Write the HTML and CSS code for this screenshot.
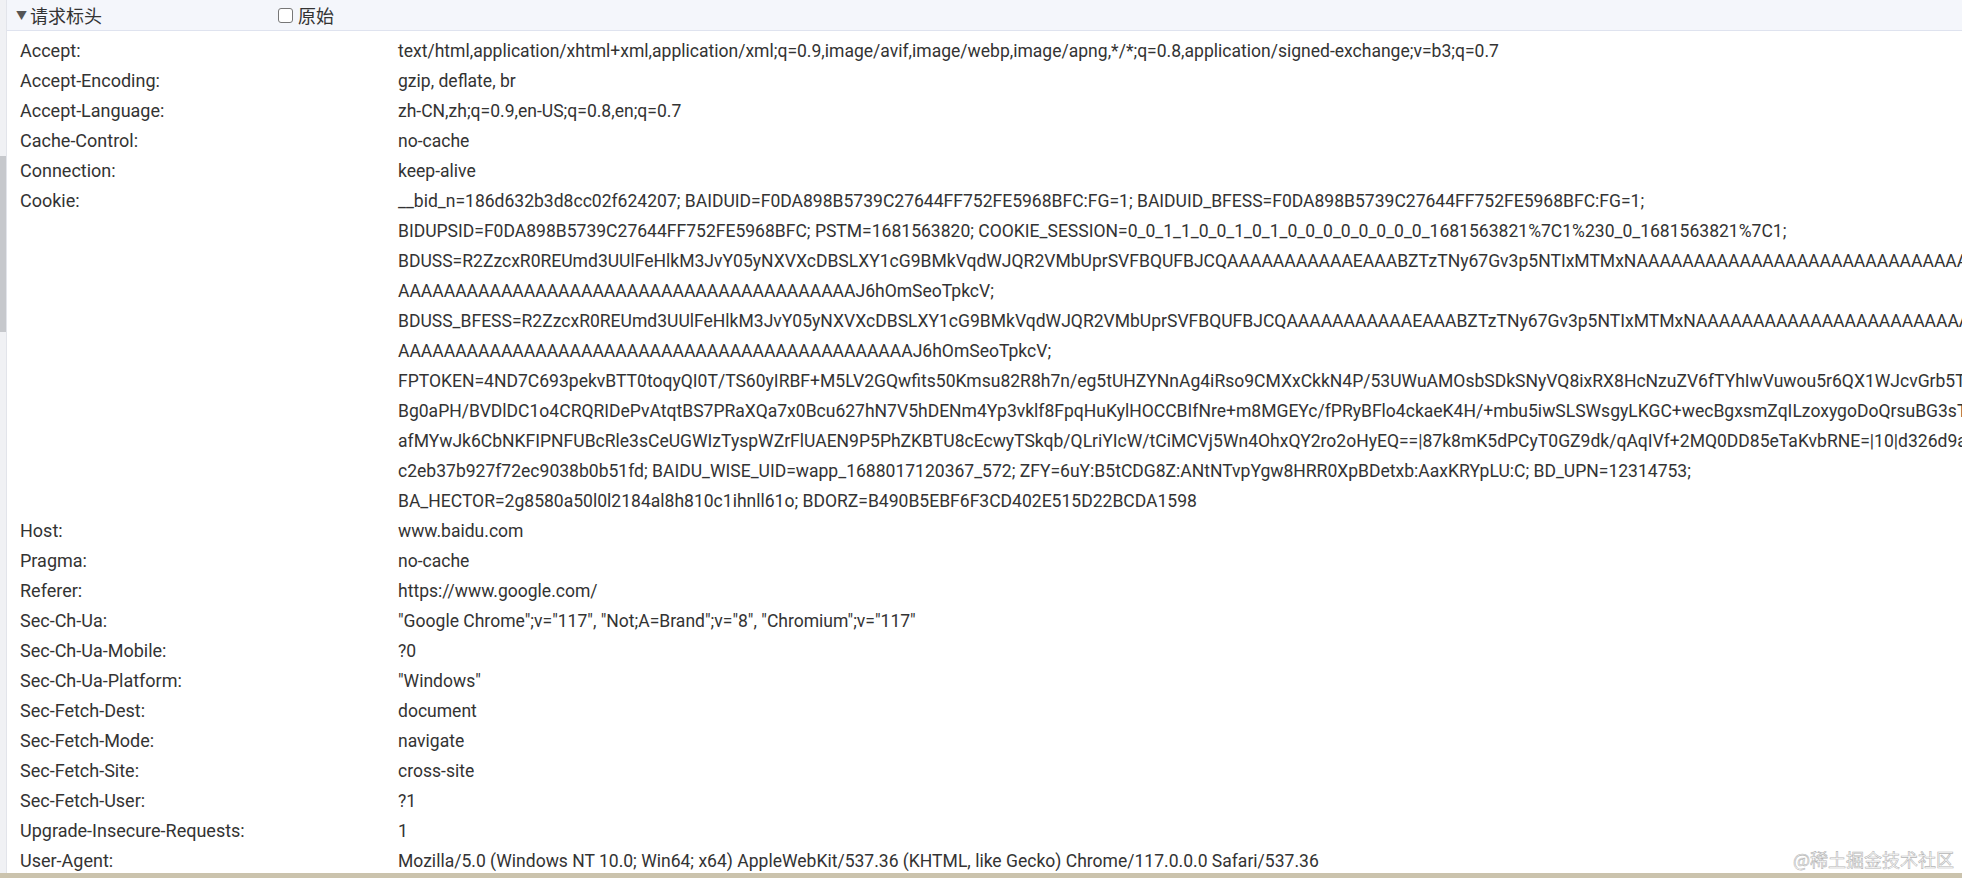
FILE: index.html
```html
<!DOCTYPE html>
<html lang="zh-CN">
<head>
    <meta charset="UTF-8">
    <title>请求标头</title>
    <link rel="stylesheet" href="styles.css">
</head>
<body>
    <div class="page">
        <div class="gutter"><div class="thumb"></div></div>
        <div class="panel">
            <div class="section-head">
                <span class="caret">▼</span>
                <span class="title">请求标头</span>
                <label class="raw"><span class="box"></span>原始</label>
            </div>
            <div class="headers">
                <div class="name">Accept:</div>
                <div class="value">text/html,application/xhtml+xml,application/xml;q=0.9,image/avif,image/webp,image/apng,*/*;q=0.8,application/signed-exchange;v=b3;q=0.7</div>
                <div class="name">Accept-Encoding:</div>
                <div class="value">gzip, deflate, br</div>
                <div class="name">Accept-Language:</div>
                <div class="value">zh-CN,zh;q=0.9,en-US;q=0.8,en;q=0.7</div>
                <div class="name">Cache-Control:</div>
                <div class="value">no-cache</div>
                <div class="name">Connection:</div>
                <div class="value">keep-alive</div>
                <div class="name">Cookie:</div>
                <div class="value">
                    <div>__bid_n=186d632b3d8cc02f624207; BAIDUID=F0DA898B5739C27644FF752FE5968BFC:FG=1; BAIDUID_BFESS=F0DA898B5739C27644FF752FE5968BFC:FG=1;</div>
                    <div>BIDUPSID=F0DA898B5739C27644FF752FE5968BFC; PSTM=1681563820; COOKIE_SESSION=0_0_1_1_0_0_1_0_1_0_0_0_0_0_0_0_0_1681563821%7C1%230_0_1681563821%7C1;</div>
                    <div>BDUSS=R2ZzcxR0REUmd3UUlFeHlkM3JvY05yNXVXcDBSLXY1cG9BMkVqdWJQR2VMbUprSVFBQUFBJCQAAAAAAAAAAAEAAABZTzTNy67Gv3p5NTIxMTMxNAAAAAAAAAAAAAAAAAAAAAAAAAAAAAAAAAAAAAAAAAA</div>
                    <div>AAAAAAAAAAAAAAAAAAAAAAAAAAAAAAAAAAAAAAAAJ6hOmSeoTpkcV;</div>
                    <div>BDUSS_BFESS=R2ZzcxR0REUmd3UUlFeHlkM3JvY05yNXVXcDBSLXY1cG9BMkVqdWJQR2VMbUprSVFBQUFBJCQAAAAAAAAAAAEAAABZTzTNy67Gv3p5NTIxMTMxNAAAAAAAAAAAAAAAAAAAAAAAAAAAAAAAAAAAAAAAAAA</div>
                    <div>AAAAAAAAAAAAAAAAAAAAAAAAAAAAAAAAAAAAAAAAAAAAAJ6hOmSeoTpkcV;</div>
                    <div>FPTOKEN=4ND7C693pekvBTT0toqyQI0T/TS60yIRBF+M5LV2GQwfits50Kmsu82R8h7n/eg5tUHZYNnAg4iRso9CMXxCkkN4P/53UWuAMOsbSDkSNyVQ8ixRX8HcNzuZV6fTYhIwVuwou5r6QX1WJcvGrb5TqMnB</div>
                    <div>Bg0aPH/BVDlDC1o4CRQRIDePvAtqtBS7PRaXQa7x0Bcu627hN7V5hDENm4Yp3vklf8FpqHuKylHOCCBIfNre+m8MGEYc/fPRyBFlo4ckaeK4H/+mbu5iwSLSWsgyLKGC+wecBgxsmZqILzoxygoDoQrsuBG3sTkdW</div>
                    <div>afMYwJk6CbNKFIPNFUBcRle3sCeUGWIzTyspWZrFlUAEN9P5PhZKBTU8cEcwyTSkqb/QLriYIcW/tCiMCVj5Wn4OhxQY2ro2oHyEQ==|87k8mK5dPCyT0GZ9dk/qAqIVf+2MQ0DD85eTaKvbRNE=|10|d326d9a1b4</div>
                    <div>c2eb37b927f72ec9038b0b51fd; BAIDU_WISE_UID=wapp_1688017120367_572; ZFY=6uY:B5tCDG8Z:ANtNTvpYgw8HRR0XpBDetxb:AaxKRYpLU:C; BD_UPN=12314753;</div>
                    <div>BA_HECTOR=2g8580a50l0l2184al8h810c1ihnll61o; BDORZ=B490B5EBF6F3CD402E515D22BCDA1598</div>
                </div>
                <div class="name">Host:</div>
                <div class="value">www.baidu.com</div>
                <div class="name">Pragma:</div>
                <div class="value">no-cache</div>
                <div class="name">Referer:</div>
                <div class="value">https://www.google.com/</div>
                <div class="name">Sec-Ch-Ua:</div>
                <div class="value">"Google Chrome";v="117", "Not;A=Brand";v="8", "Chromium";v="117"</div>
                <div class="name">Sec-Ch-Ua-Mobile:</div>
                <div class="value">?0</div>
                <div class="name">Sec-Ch-Ua-Platform:</div>
                <div class="value">"Windows"</div>
                <div class="name">Sec-Fetch-Dest:</div>
                <div class="value">document</div>
                <div class="name">Sec-Fetch-Mode:</div>
                <div class="value">navigate</div>
                <div class="name">Sec-Fetch-Site:</div>
                <div class="value">cross-site</div>
                <div class="name">Sec-Fetch-User:</div>
                <div class="value">?1</div>
                <div class="name">Upgrade-Insecure-Requests:</div>
                <div class="value">1</div>
                <div class="name">User-Agent:</div>
                <div class="value">Mozilla/5.0 (Windows NT 10.0; Win64; x64) AppleWebKit/537.36 (KHTML, like Gecko) Chrome/117.0.0.0 Safari/537.36</div>
            </div>
        </div>
    </div>
    <div class="footer-bar"></div>
    <div class="watermark">@稀土掘金技术社区</div>
</body>
</html>
```

FILE: styles.css
```css
body { margin: 0; height: 878px; overflow: hidden; background: #fff; color: #333; font-family: Roboto, "Noto Sans CJK SC", sans-serif; position: relative; }
.page { display: flex; height: 873px; overflow: hidden; }
.gutter { flex: 0 0 6px; background: #f0f1f4; border-right: 1px solid #e2e4ea; padding-top: 156px; }
.thumb { height: 176px; background: #c6c8cc; }
.panel { flex: 1; min-width: 0; overflow: hidden; }
.section-head { display: flex; align-items: center; height: 30px; padding-left: 9px; background: #f4f6fb; border-bottom: 1px solid #dfe3ef; font-family: "Noto Sans CJK SC", sans-serif; font-size: 18px; color: #333; }
.caret { font-size: 11px; color: #555; width: 14px; }
.title { flex: 0 0 248px; }
.raw { display: flex; align-items: center; }
.box { width: 13px; height: 13px; border: 1px solid #777; border-radius: 3px; margin-right: 5px; background: #fff; }
.headers { display: grid; grid-template-columns: 378px 1fr; padding: 5px 0 0 13px; font-size: 17.55px; line-height: 30px; }
.name { font-size: 18px; }
.value { white-space: nowrap; }
.footer-bar { height: 5px; background: #cbc3ad; }
.watermark { position: absolute; right: 8px; bottom: 6px; font-family: "Noto Sans CJK SC", sans-serif; font-size: 18px; color: #fff; -webkit-text-stroke: 0.6px #b5b5b5; }
```
